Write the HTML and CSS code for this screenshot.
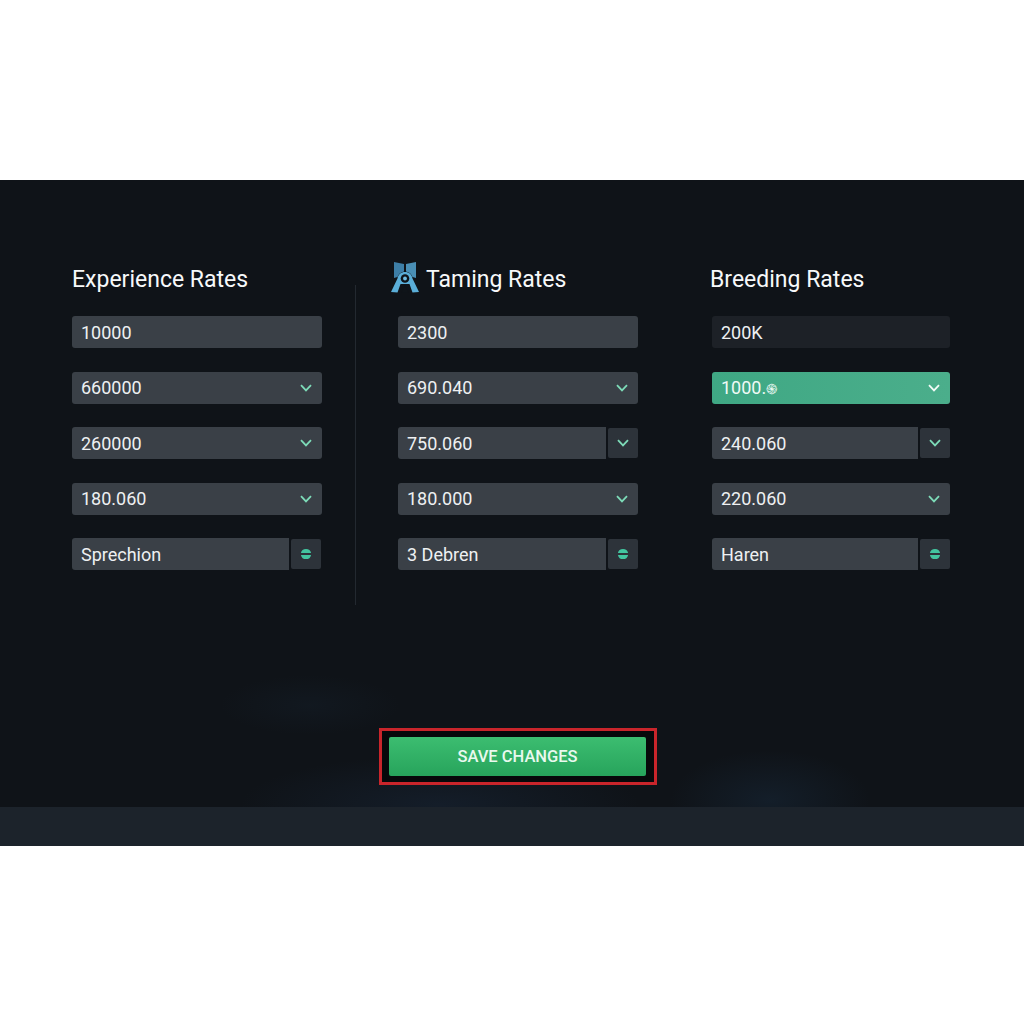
FILE: index.html
```html
<!DOCTYPE html>
<html lang="en">
<head>
    <meta charset="UTF-8">
    <meta name="viewport" content="width=device-width, initial-scale=1.0">
    <title>Server Rates</title>
    <link rel="stylesheet" href="styles.css">
</head>
<body>
    <svg class="icon-defs" width="0" height="0">
        <symbol id="chevron" viewBox="0 0 12 8"><path d="M1 1.2 6 6.4l5-5.200" fill="none" stroke="currentColor" stroke-width="1.8"/></symbol>
        <symbol id="disc" viewBox="0 0 12 12"><path d="M.9 5.100a5.200 5.200 0 0 1 10.200 0zM.9 6.900h10.200a5.200 5.200 0 0 1-10.200 0z" fill="currentColor"/></symbol>
    </svg>

    <main class="panel">
        <div class="columns">
            <section class="column column-exp">
                <h2 class="column-title">Experience Rates</h2>
                <div class="fields">
                    <div class="field"><span>10000</span></div>
                    <div class="field"><span>660000</span><svg class="chevron"><use href="#chevron"/></svg></div>
                    <div class="field"><span>260000</span><svg class="chevron"><use href="#chevron"/></svg></div>
                    <div class="field"><span>180.060</span><svg class="chevron"><use href="#chevron"/></svg></div>
                    <div class="field-group">
                        <div class="field"><span>Sprechion</span></div>
                        <button class="side-btn"><svg class="disc"><use href="#disc"/></svg></button>
                    </div>
                </div>
            </section>

            <div class="divider"></div>

            <section class="column column-taming">
                <h2 class="column-title">
                    <svg class="title-icon" viewBox="0 0 28 32">
                        <path d="M3 1 13 3v7.500c-3 .5-5.500 2.500-6.500 5.500L3 17z" fill="#3d7ea6"/>
                        <path d="M25 1 15 3v7.500c3 .5 5.500 2.500 6.500 5.500l3.500 1z" fill="#4a8fb5"/>
                        <path d="M14 11c4 0 7 2.700 7.500 6.500L28 31l-6.500.5-3-8.500h-9l-3 8.500L0 31l6.500-13.500C7 13.700 10 11 14 11z" fill="#5aaed8"/>
                        <circle cx="14" cy="17.500" r="4.300" fill="#0f1419"/>
                        <circle cx="14" cy="17.500" r="1.900" fill="#6fbde2"/>
                        <path d="M10.500 31.500 14 24l3.500 7.500z" fill="#0f1419"/>
                    </svg>
                    Taming Rates
                </h2>
                <div class="fields">
                    <div class="field"><span>2300</span></div>
                    <div class="field"><span>690.040</span><svg class="chevron"><use href="#chevron"/></svg></div>
                    <div class="field-group">
                        <div class="field"><span>750.060</span></div>
                        <button class="side-btn"><svg class="chevron"><use href="#chevron"/></svg></button>
                    </div>
                    <div class="field"><span>180.000</span><svg class="chevron"><use href="#chevron"/></svg></div>
                    <div class="field-group">
                        <div class="field"><span>3 Debren</span></div>
                        <button class="side-btn"><svg class="disc"><use href="#disc"/></svg></button>
                    </div>
                </div>
            </section>

            <section class="column column-breeding">
                <h2 class="column-title">Breeding Rates</h2>
                <div class="fields">
                    <div class="field field-dim"><span>200K</span></div>
                    <div class="field field-active"><span>1000.<small class="field-glyph">֍</small></span><svg class="chevron"><use href="#chevron"/></svg></div>
                    <div class="field-group">
                        <div class="field"><span>240.060</span></div>
                        <button class="side-btn"><svg class="chevron"><use href="#chevron"/></svg></button>
                    </div>
                    <div class="field"><span>220.060</span><svg class="chevron"><use href="#chevron"/></svg></div>
                    <div class="field-group">
                        <div class="field"><span>Haren</span></div>
                        <button class="side-btn"><svg class="disc"><use href="#disc"/></svg></button>
                    </div>
                </div>
            </section>
        </div>

        <div class="actions">
            <div class="save-frame">
                <button class="save-btn">SAVE CHANGES</button>
            </div>
        </div>

        <footer class="footer-bar"></footer>
    </main>
</body>
</html>
```

FILE: styles.css
```css
* {
    margin: 0;
    padding: 0;
    box-sizing: border-box;
}

body {
    font-family: Roboto, 'Liberation Sans', 'DejaVu Sans', sans-serif;
    background: #fff;
    padding-top: 180px;
    min-height: 1024px;
}

.icon-defs {
    position: absolute;
}

.panel {
    height: 666px;
    display: flex;
    flex-direction: column;
    background:
        radial-gradient(ellipse 90px 30px at 310px 525px, rgba(40, 70, 100, 0.1), transparent),
        radial-gradient(ellipse 100px 50px at 770px 620px, rgba(40, 80, 120, 0.18), transparent),
        radial-gradient(ellipse 200px 50px at 440px 625px, rgba(40, 70, 110, 0.2), transparent),
        #0f1318;
}

.columns {
    display: flex;
    padding: 85px 0 0 72px;
    height: 425px;
}

.column-title {
    display: flex;
    align-items: center;
    height: 28px;
    margin-bottom: 23px;
    color: #f7f9fa;
    font-size: 23px;
    font-weight: 400;
    white-space: nowrap;
}

.column-exp {
    width: 250px;
}

.column-taming {
    width: 240px;
    margin-left: 42px;
}

.column-taming .column-title {
    margin-left: -7px;
}

.column-breeding {
    width: 238px;
    margin-left: 74px;
}

.column-breeding .column-title {
    margin-left: -2px;
}

.title-icon {
    width: 28px;
    height: 32px;
    margin-right: 7px;
    margin-top: -4px;
}

.divider {
    width: 1px;
    height: 320px;
    margin: 20px 0 0 33px;
    background: #232930;
}

.fields {
    display: flex;
    flex-direction: column;
    gap: 23.5px;
}

.field {
    display: flex;
    align-items: center;
    justify-content: space-between;
    flex: none;
    height: 32px;
    padding: 0 9px;
    border-radius: 3px;
    background: #3a4047;
    color: #eef0f2;
    font-size: 18px;
}

.field-dim {
    background: #1d2127;
}

.field-active {
    background: linear-gradient(90deg, #3fa884, #4bae8b);
    color: #f0faf6;
}

.field-active .chevron {
    color: #f2fbf7;
}

.field-glyph {
    font-size: 14px;
}

.field-group {
    display: flex;
    align-items: center;
    gap: 2px;
}

.field-group .field {
    flex: 1;
    border-radius: 3px 0 0 3px;
}

.column-exp .field-group {
    margin-right: 1px;
}

.side-btn {
    display: flex;
    align-items: center;
    justify-content: center;
    flex: none;
    width: 30px;
    height: 30px;
    border: none;
    border-radius: 2px;
    background: #2d333a;
}

.chevron {
    width: 12px;
    height: 8px;
    margin-right: 1px;
    color: #7ddbb8;
}

.side-btn .chevron {
    margin-right: 0;
}

.disc {
    width: 12px;
    height: 12px;
    color: #43c5a0;
}

.actions {
    flex: 1;
    display: flex;
    justify-content: center;
    padding: 123px 0 0 12px;
}

.save-frame {
    width: 278px;
    height: 57px;
    padding: 6px 8px 6px 7px;
    border: 3px solid #c9252b;
    background: #07090b;
}

.save-btn {
    display: block;
    width: 100%;
    height: 39px;
    border: none;
    border-radius: 2px;
    background: linear-gradient(180deg, #3cbd70, #27a45c);
    color: #e9f9ef;
    font-family: inherit;
    font-size: 16.5px;
    font-weight: 500;
}

.footer-bar {
    height: 39px;
    background: #1c232b;
}
```
